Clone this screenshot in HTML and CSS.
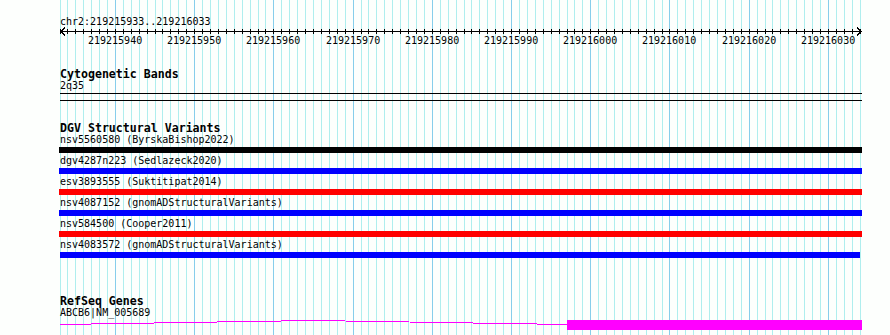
FILE: index.html
```html
<!DOCTYPE html>
<html lang="en">

<head>
    <meta charset="UTF-8">
    <meta name="viewport" content="width=device-width, initial-scale=1.0">
    <title>chr2:219215933..219216033</title>
    <link rel="stylesheet" href="styles.css">
</head>

<body>
    <div class="browser">
        <!-- base grid, filled in by script.js -->
        <svg id="grid" class="grid" width="802" height="335"></svg>

        <div class="ruler">
            <div class="location">chr2:219215933..219216033</div>
            <svg id="scale" class="scale" width="802" height="9"></svg>
            <div id="scale-labels" class="scale-labels"></div>
        </div>

        <div class="track cyto">
            <h2>Cytogenetic Bands</h2>
            <div class="label">2q35</div>
            <div class="band"></div>
        </div>

        <div class="track dgv">
            <h2>DGV Structural Variants</h2>
            <div class="feature">
                <div class="label">nsv5560580 (ByrskaBishop2022)</div>
                <div class="bar black"></div>
            </div>
            <div class="feature">
                <div class="label">dgv4287n223 (Sedlazeck2020)</div>
                <div class="bar blue"></div>
            </div>
            <div class="feature">
                <div class="label">esv3893555 (Suktitipat2014)</div>
                <div class="bar red"></div>
            </div>
            <div class="feature">
                <div class="label">nsv4087152 (gnomADStructuralVariants)</div>
                <div class="bar blue"></div>
            </div>
            <div class="feature">
                <div class="label">nsv584500 (Cooper2011)</div>
                <div class="bar red"></div>
            </div>
            <div class="feature">
                <div class="label">nsv4083572 (gnomADStructuralVariants)</div>
                <div class="bar blue ends-in-view"></div>
            </div>
        </div>

        <div class="track refseq">
            <h2>RefSeq Genes</h2>
            <div class="label">ABCB6|NM_005689</div>
            <svg class="gene" width="802" height="10">
                <polyline class="intron" points="0,4.49 253.5,0.5 507,4.49" />
                <rect class="exon" x="507" y="0" width="295" height="10" />
            </svg>
        </div>
    </div>

    <script src="script.js"></script>
</body>

</html>
```

FILE: styles.css
```css
body {
    margin: 0;
    padding: 0;
    background-color: #fdfffd;
    color: #000;
    font-family: "DejaVu Sans Mono", monospace;
    font-size: 10px;
    line-height: 12px;
}

.browser {
    position: relative;
    width: 802px;
    height: 335px;
    padding-left: 60px;
}

.grid {
    position: absolute;
    left: 60px;
    top: 0;
}

.grid rect {
    fill: #afeeee;
}

.grid rect.major {
    fill: #87ceeb;
}

.ruler {
    position: relative;
    height: 68px;
}

.location {
    padding-top: 16px;
}

.scale {
    position: absolute;
    left: 0;
    top: 27px;
    overflow: visible;
}

.scale rect {
    fill: #000;
}

.scale path {
    fill: none;
    stroke: #000;
    stroke-width: 1;
    shape-rendering: crispEdges;
}

.scale-labels {
    position: absolute;
    left: 0;
    top: 35px;
    width: 802px;
    height: 12px;
}

.scale-labels span {
    position: absolute;
    top: 0;
    width: 54px;
    text-align: center;
}

.track {
    position: relative;
}

.track h2 {
    margin: 0;
    font-size: 11.6px;
    line-height: 12px;
    font-weight: bold;
}

.label {
    white-space: nowrap;
}

.band {
    margin-top: 1px;
    height: 6px;
    border-top: 1px solid #000;
    border-bottom: 1px solid #000;
}

.dgv {
    margin-top: 21px;
}

.bar {
    height: 6px;
    margin: 1px 0 2px -1px;
}

.bar.ends-in-view {
    margin-left: 0;
    margin-right: 2px;
}

.black {
    background: #000;
}

.blue {
    background: #0000ff;
}

.red {
    background: #ff0000;
}

/* the last bar's bottom margin collapses into this one */
.refseq {
    margin-top: 37px;
}

.gene {
    display: block;
    margin-top: 1px;
}

.gene .intron {
    fill: none;
    stroke: #ff00ff;
    stroke-width: 1;
    shape-rendering: crispEdges;
}

.gene .exon {
    fill: #ff00ff;
}
```

FILE: script.js
```js
// View window and scale
const START = 219215933;
const END = 219216033;
const ORIGIN = 59.5;   // page x of the first base
const BP_WIDTH = 7.922; // pixels per base
const SVGNS = "http://www.w3.org/2000/svg";

// x inside the 802px track panel (panel starts at page x 60)
function xOf(pos) {
    return Math.round(ORIGIN + (pos - START) * BP_WIDTH) - 60;
}

function addRect(svg, x, y, w, h, cls) {
    const r = document.createElementNS(SVGNS, "rect");
    r.setAttribute("x", x);
    r.setAttribute("y", y);
    r.setAttribute("width", w);
    r.setAttribute("height", h);
    if (cls) r.setAttribute("class", cls);
    svg.appendChild(r);
}

function drawGrid() {
    const grid = document.getElementById("grid");
    for (let pos = START; pos <= END + 1; pos++) {
        addRect(grid, xOf(pos), 0, 1, 335, pos % 10 === 0 ? "major" : "");
    }
}

function drawScale() {
    const scale = document.getElementById("scale");
    const labels = document.getElementById("scale-labels");

    // axis line
    addRect(scale, 0, 4, 801, 1);

    // one tick per base, a label every 10 bases
    for (let pos = START; pos <= END + 1; pos++) {
        const x = xOf(pos);
        addRect(scale, x, 2, 1, 5);
        if (pos % 10 === 0) {
            const span = document.createElement("span");
            span.textContent = pos;
            span.style.left = (x - 27) + "px";
            labels.appendChild(span);
        }
    }

    // arrow heads at both ends
    const arrows = document.createElementNS(SVGNS, "path");
    arrows.setAttribute("d", "M5 0.5 L1 4.5 L5 8.5 M797 0.5 L801 4.5 L797 8.5");
    scale.appendChild(arrows);
}

document.addEventListener("DOMContentLoaded", () => {
    drawGrid();
    drawScale();
});
```
